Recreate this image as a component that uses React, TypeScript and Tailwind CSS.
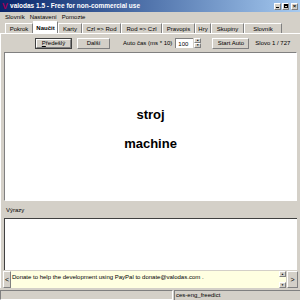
import React from 'react'

const tabs = [
  { label: 'Pokrok', w: 'w-[28px]' },
  { label: 'Naučit', w: 'w-[25px]', active: true },
  { label: 'Karty', w: 'w-[24px]' },
  { label: 'Czl => Rod', w: 'w-[39px]' },
  { label: 'Rod => Czl', w: 'w-[41px]' },
  { label: 'Pravopis', w: 'w-[33px]' },
  { label: 'Hry', w: 'w-[16px]' },
  { label: 'Skupiny', w: 'w-[33px]' },
  { label: 'Slovník', w: 'w-[38px]' },
]

// classic raised 3D button
const Btn: React.FC<{ className?: string; children: React.ReactNode; def?: boolean }> = ({ className = '', children, def }) => (
  <div className={`flex items-center justify-center bg-[#d4d0c8] ${def ? 'border border-[#404040]' : ''} ${className}`}>
    <div className="flex h-full w-full items-center justify-center border-t border-l border-t-white border-l-white border-b border-r border-b-[#808080] border-r-[#808080]">
      {children}
    </div>
  </div>
)

export default function App() {
  return (
    <div className="flex h-[300px] w-[300px] flex-col overflow-hidden bg-[#d4d0c8] text-[6px] leading-none text-black font-['Liberation_Sans',Arial,sans-serif]">
      {/* title bar */}
      <div className="flex h-[12px] items-center bg-gradient-to-r from-[#0a246a] to-[#a6caf0] pl-[2px] pr-[2px]">
        <span className="mr-[2px] text-[9px] font-bold text-[#a0005a]">V</span>
        <span className="text-[6.5px] font-bold text-white">valodas 1.5 - Free for non-commercial use</span>
        <div className="ml-auto flex gap-[1px]">
          <Btn className="h-[7px] w-[7px]"><span className="mt-[3px] block h-[1px] w-[3px] bg-black" /></Btn>
          <Btn className="h-[7px] w-[7px]"><span className="block h-[4px] w-[4px] border border-black border-t-2" /></Btn>
          <Btn className="ml-[1px] h-[7px] w-[7px] text-[6px] font-bold">×</Btn>
        </div>
      </div>

      {/* menu */}
      <div className="flex h-[9px] items-center gap-[5px] pl-[5px]">
        <span>Slovník</span>
        <span>Nastavení</span>
        <span>Pomozte</span>
      </div>

      {/* tabs */}
      <div className="flex h-[12px] items-end pl-[5px]">
        {tabs.map((t) =>
          t.active ? (
            <div key={t.label} className={`${t.w} flex h-[12px] items-center justify-center border-t border-l border-r border-t-white border-l-white border-r-[#808080] bg-white font-bold`}>
              {t.label}
            </div>
          ) : (
            <div key={t.label} className={`${t.w} flex h-[10px] items-center justify-center border-t border-l border-r border-t-white border-l-white border-r-[#808080]`}>
              {t.label}
            </div>
          )
        )}
      </div>

      {/* tab panel */}
      <div className="flex flex-1 flex-col border-t border-l border-t-white border-l-white pl-[2px] pr-[2px]">
        {/* toolbar */}
        <div className="flex h-[18px] items-center">
          <Btn def className="ml-[32px] h-[11px] w-[37px]"><span className="underline">P</span>ředešlý</Btn>
          <Btn className="ml-[5px] h-[11px] w-[33px]">Další</Btn>
          <span className="ml-[13px]">Auto čas (ms * 10)</span>
          <div className="ml-[3px] flex h-[10px] w-[18px] items-center border-t border-l border-t-[#808080] border-l-[#808080] bg-white pl-[2px]">100</div>
          <div className="ml-[1px] flex h-[10px] w-[7px] flex-col">
            <Btn className="h-[5px] w-[7px]"><span className="text-[3px]">▲</span></Btn>
            <Btn className="h-[5px] w-[7px]"><span className="text-[3px]">▼</span></Btn>
          </div>
          <Btn className="ml-[11px] h-[11px] w-[37px]">Start Auto</Btn>
          <span className="ml-[6px]">Slovo 1 / 727</span>
        </div>

        {/* word card */}
        <div className="ml-[1px] mr-[1px] flex h-[149px] flex-col items-center justify-center gap-[16px] border-t border-l border-t-[#808080] border-l-[#808080] border-b border-r border-b-white border-r-white bg-white pt-[5px] text-[13px] font-bold">
          <span>stroj</span>
          <span>machine</span>
        </div>

        {/* phrases */}
        <div className="flex h-[17px] items-center pl-[3px]">Výrazy</div>
        <div className="ml-[1px] mr-[1px] h-[52px] border-t border-l border-t-[#404040] border-l-[#404040] bg-white" />

        {/* donate */}
        <div className="mt-[1px] flex h-[17px]">
          <Btn className="h-[17px] w-[8px] text-[7px]">&lt;</Btn>
          <div className="flex flex-1 items-start bg-[#ffffe1] pl-[1px] pt-[3px]">
            Donate to help the development using PayPal to donate@valodas.com .
          </div>
          <div className="flex w-[7px] flex-col bg-[#ffffe1]">
            <Btn className="h-[6px] w-[7px]"><span className="text-[3px]">▲</span></Btn>
            <div className="flex-1" />
            <Btn className="h-[6px] w-[7px]"><span className="text-[3px]">▼</span></Btn>
          </div>
          <Btn className="ml-[1px] h-[17px] w-[11px] text-[7px]">&gt;</Btn>
        </div>
      </div>

      {/* status bar */}
      <div className="flex h-[12px] items-center gap-[1px] pt-[1px]">
        <div className="h-[10px] w-[173px] border-t border-l border-t-[#808080] border-l-[#808080] border-b border-r border-b-white border-r-white" />
        <div className="flex h-[10px] flex-1 items-center border-t border-l border-t-[#808080] border-l-[#808080] pl-[1px]">ces-eng_freedict</div>
      </div>
    </div>
  )
}
